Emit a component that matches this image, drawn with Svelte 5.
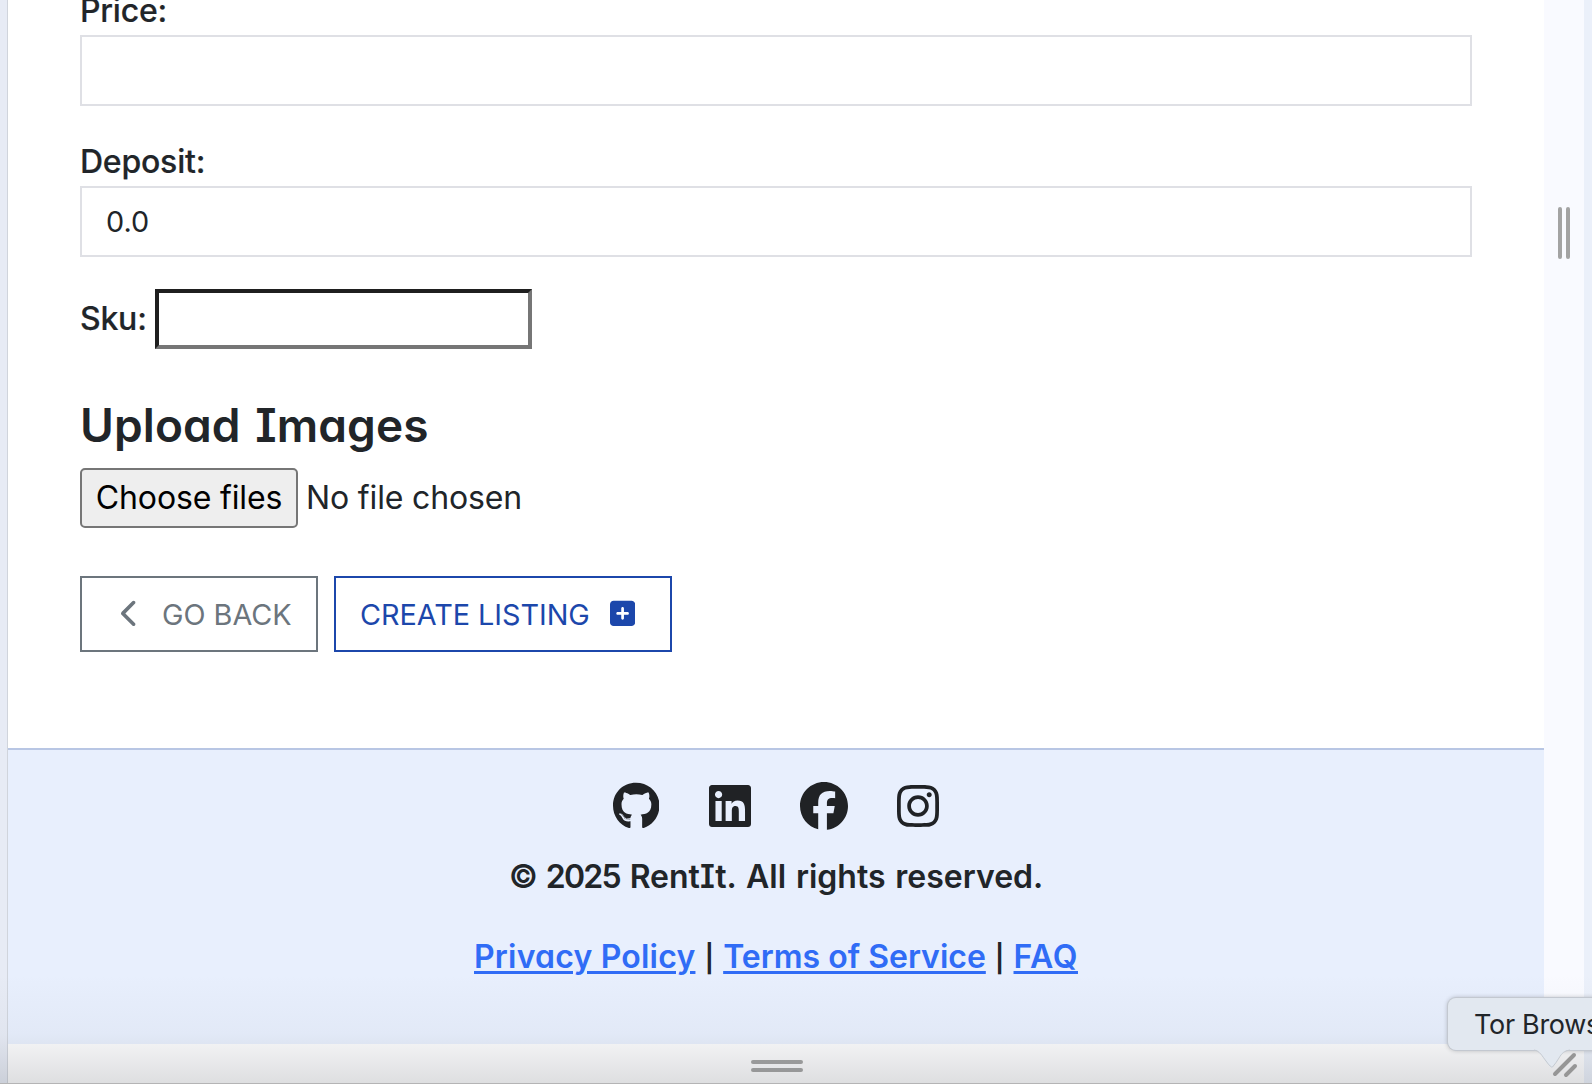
<script>
  const socials = [
    { name: 'GitHub', w: 496, d: 'M165.9 397.4c0 2-2.3 3.6-5.2 3.6-3.3.3-5.6-1.3-5.6-3.6 0-2 2.3-3.6 5.2-3.6 3-.3 5.6 1.3 5.6 3.6zm-31.1-4.5c-.7 2 1.3 4.3 4.3 4.9 2.6 1 5.6 0 6.2-2s-1.3-4.3-4.3-5.2c-2.6-.7-5.5.3-6.2 2.3zm44.2-1.7c-2.9.7-4.9 2.6-4.6 4.9.3 2 2.9 3.3 5.9 2.6 2.9-.7 4.9-2.6 4.6-4.6-.3-1.9-3-3.2-5.9-2.9zM244.8 8C106.1 8 0 113.3 0 252c0 110.9 69.8 205.8 169.5 239.2 12.8 2.3 17.3-5.6 17.3-12.1 0-6.2-.3-40.4-.3-61.4 0 0-70 15-84.7-29.8 0 0-11.4-29.1-27.8-36.6 0 0-22.9-15.7 1.6-15.4 0 0 24.9 2 38.6 25.8 21.9 38.6 58.6 27.5 72.9 20.9 2.3-16 8.8-27.1 16-33.7-55.9-6.2-112.3-14.3-112.3-110.5 0-27.5 7.6-41.3 23.6-58.9-2.6-6.5-11.1-33.3 2.6-67.9 20.9-6.5 69 27 69 27 20-5.6 41.5-8.5 62.8-8.5s42.8 2.9 62.8 8.5c0 0 48.1-33.6 69-27 13.7 34.7 5.2 61.4 2.6 67.9 16 17.7 25.8 31.5 25.8 58.9 0 96.5-58.9 104.2-114.8 110.5 9.2 7.9 17 22.9 17 46.4 0 33.7-.3 75.4-.3 83.6 0 6.5 4.6 14.4 17.3 12.1C428.2 457.8 496 362.9 496 252 496 113.3 383.5 8 244.8 8zM97.2 352.9c-1.3 1-1 3.3.7 5.2 1.6 1.6 3.9 2.3 5.2 1 1.3-1 1-3.3-.7-5.2-1.6-1.6-3.9-2.3-5.2-1zm-10.8-8.1c-.7 1.3.3 2.9 2.3 3.9 1.6 1 3.6.7 4.3-.7.7-1.3-.3-2.9-2.3-3.9-2-.6-3.6-.3-4.3.7zm32.4 35.6c-1.6 1.3-1 4.3 1.3 6.2 2.3 2.3 5.2 2.6 6.5 1 1.3-1.3.7-4.3-1.3-6.2-2.2-2.3-5.2-2.6-6.5-1zm-11.4-14.7c-1.6 1-1.6 3.6 0 5.9 1.6 2.3 4.3 3.3 5.6 2.3 1.6-1.3 1.6-3.9 0-6.2-1.4-2.3-4-3.3-5.6-2z' },
    { name: 'LinkedIn', w: 448, d: 'M416 32H31.9C14.3 32 0 46.5 0 64.3v383.4C0 465.5 14.3 480 31.9 480H416c17.6 0 32-14.5 32-32.3V64.3c0-17.8-14.4-32.3-32-32.3zM135.4 416H69V202.2h66.5V416zm-33.2-243c-21.3 0-38.5-17.3-38.5-38.5S80.9 96 102.2 96c21.2 0 38.5 17.3 38.5 38.5 0 21.3-17.2 38.5-38.5 38.5zm282.1 243h-66.4V312c0-24.8-.5-56.7-34.5-56.7-34.6 0-39.9 27-39.9 54.9V416h-66.4V202.2h63.7v29.2h.9c8.9-16.8 30.6-34.5 62.9-34.5 67.2 0 79.7 44.3 79.7 101.9V416z' },
    { name: 'Facebook', w: 512, d: 'M512 256C512 114.6 397.4 0 256 0S0 114.6 0 256C0 376 82.7 476.8 194.2 504.5V334.2H141.4V256h52.8V222.3c0-87.1 39.4-127.5 125-127.5c16.2 0 44.2 3.2 55.7 6.4V172c-6-.6-16.5-1-29.6-1c-42 0-58.2 15.9-58.2 57.2V256h83.6l-14.4 78.2H287V510.1C413.8 494.8 512 386.9 512 256z' },
    { name: 'Instagram', w: 448, d: 'M224.1 141c-63.6 0-114.9 51.3-114.9 114.9s51.3 114.9 114.9 114.9S339 319.5 339 255.9 287.7 141 224.1 141zm0 189.6c-41.1 0-74.7-33.5-74.7-74.7s33.5-74.7 74.7-74.7 74.7 33.5 74.7 74.7-33.6 74.7-74.7 74.7zm146.4-194.3c0 14.9-12 26.8-26.8 26.8-14.9 0-26.8-12-26.8-26.8s12-26.8 26.8-26.8 26.8 12 26.8 26.8zm76.1 27.2c-1.7-35.9-9.9-67.7-36.2-93.9-26.2-26.2-58-34.4-93.9-36.2-37-2.1-147.9-2.1-184.9 0-35.8 1.7-67.6 9.9-93.9 36.1s-34.4 58-36.2 93.9c-2.1 37-2.1 147.9 0 184.9 1.7 35.9 9.9 67.7 36.2 93.9s58 34.4 93.9 36.2c37 2.1 147.9 2.1 184.9 0 35.9-1.7 67.7-9.9 93.9-36.2 26.2-26.2 34.4-58 36.2-93.9 2.1-37 2.1-147.8 0-184.8zM398.8 388c-7.8 19.6-22.9 34.7-42.6 42.6-29.5 11.7-99.5 9-132.1 9s-102.7 2.6-132.1-9c-19.6-7.8-34.7-22.9-42.6-42.6-11.7-29.5-9-99.5-9-132.1s-2.6-102.7 9-132.1c7.8-19.6 22.9-34.7 42.6-42.6 29.5-11.7 99.5-9 132.1-9s102.7-2.6 132.1 9c19.6 7.8 34.7 22.9 42.6 42.6 11.7 29.5 9 99.5 9 132.1s2.7 102.7-9 132.1z' }
  ];
</script>

<div class="window">
  <div class="edge"></div>
  <div class="device">
    <div class="row">
      <div class="page">
        <main>
          <label class="label first" for="price">Price:</label>
          <input id="price" class="field" type="text" />
          <label class="label second" for="deposit">Deposit:</label>
          <input id="deposit" class="field" type="text" value="0.0" />
          <div class="sku">
            <label class="label" for="sku">Sku:</label>
            <input id="sku" type="text" />
          </div>
          <h2>Upload Images</h2>
          <div class="file">
            <button class="choose">Choose files</button>
            <span class="chosen">No file chosen</span>
          </div>
          <div class="actions">
            <button class="btn back">
              <svg width="18" height="28.8" viewBox="0 0 320 512"><path d="M9.4 233.4c-12.5 12.5-12.5 32.8 0 45.3l192 192c12.5 12.5 32.8 12.5 45.3 0s12.5-32.8 0-45.3L77.3 256 246.6 86.6c12.5-12.5 12.5-32.8 0-45.3s-32.8-12.5-45.3 0l-192 192z" /></svg>
              <span>GO BACK</span>
            </button>
            <button class="btn create">
              <span>CREATE LISTING</span>
              <svg width="25.2" height="28.8" viewBox="0 0 448 512"><path d="M64 32C28.7 32 0 60.7 0 96V416c0 35.3 28.7 64 64 64H384c35.3 0 64-28.7 64-64V96c0-35.3-28.7-64-64-64H64zM200 344V280H136c-13.3 0-24-10.7-24-24s10.7-24 24-24h64V168c0-13.3 10.7-24 24-24s24 10.7 24 24v64h64c13.3 0 24 10.7 24 24s-10.7 24-24 24H248v64c0 13.3-10.7 24-24 24s-24-10.7-24-24z" /></svg>
            </button>
          </div>
        </main>
        <footer>
          <div class="socials">
            {#each socials as s}
              <svg height="48" width={s.w * 48 / 512} viewBox="0 0 {s.w} 512" role="img" aria-label={s.name}><path d={s.d} /></svg>
            {/each}
          </div>
          <p class="copy">© <span class="year">2025</span> RentIt. All rights reserved.</p>
          <nav>
            <a class="privacy" href="#privacy">Privacy Policy</a>
            <span class="pipe">|</span>
            <a class="terms" href="#terms">Terms of Service</a>
            <span class="pipe">|</span>
            <a class="faq" href="#faq">FAQ</a>
          </nav>
        </footer>
      </div>
      <div class="rail"><i></i><i></i></div>
    </div>
    <div class="bottom"><i></i><i></i></div>
  </div>
  <div class="edge right"></div>
  <div class="shade"></div>
  <div class="tip">
    <span>Tor Browser</span>
    <svg class="tail" width="36" height="20" viewBox="0 0 36 20"><path class="fill" d="M0 0C6 2 8 7 12 13Q17 20 18.500 18Q22 14 25 9C28 4 30 2 36 0Z" /><path class="line" d="M0 1C6 2 8 7 12 12Q17 19 18.500 18Q22 14 25 9C28 4 30 2 36 1" /></svg>
  </div>
  <svg class="corner" width="26" height="26" viewBox="0 0 26 26"><path d="M3 22 22 3M14 23 23 14" /></svg>
</div>

<style>
  :global(body) { margin: 0; overflow: hidden; }
  * { box-sizing: border-box; }
  .window {
    position: relative;
    display: flex;
    width: 1592px;
    height: 1084px;
    overflow: hidden;
    font-family: Inter, sans-serif;
    font-size: 32px;
    color: #212529;
    background: #fff;
  }
  .edge { width: 8px; flex: none; background: #e7ebf5; border-right: 1px solid #d0d4dc; }
  .edge.right { background: #ebf0fa; border: 0; }
  .device { flex: 1; display: flex; flex-direction: column; min-width: 0; }
  .row { display: flex; height: 1044px; }
  .page { width: 1536px; display: flex; flex-direction: column; }
  main { height: 748px; padding: 0 72px; display: flex; flex-direction: column; align-items: flex-start; }
  .label { display: block; font-weight: 500; line-height: 48px; letter-spacing: -0.22px; -webkit-text-stroke: 0.2px; }
  .first { margin-top: -13px; }
  .second { margin-top: 32px; }
  .field {
    width: 1392px;
    height: 71px;
    border: 2px solid #dfe0e5;
    background: #fff;
    padding: 0 24px;
    font: 400 28.8px Inter, sans-serif;
    color: #212529;
    outline: none;
  }
  .sku { display: flex; align-items: center; margin-top: 32px; height: 60px; }
  .sku .label { width: 75px; }
  .sku input { width: 377px; height: 60px; border: 4px solid; border-color: #1f1f1f #767676 #767676 #1f1f1f; background: #fff; padding: 0; }
  h2 { margin: 47px 0 0; height: 72px; font-size: 46px; line-height: 58px; font-weight: 600; font-feature-settings: 'cv08', 'cv11'; word-spacing: 3px; letter-spacing: 0.1px; white-space: nowrap; }
  .file { display: flex; align-items: center; gap: 8px; height: 60px; }
  .choose { width: 218px; height: 60px; border: 2px solid #767676; border-radius: 5px; background: #eee; font: 400 32px Inter, sans-serif; letter-spacing: -0.15px; color: #000; padding: 0 0 2px; white-space: nowrap; }
  .chosen { letter-spacing: -0.15px; padding-bottom: 2px; }
  .actions { display: flex; gap: 16px; margin-top: 48px; }
  .btn { display: flex; align-items: center; height: 76px; background: #fff; border: 2px solid currentColor; padding: 0; font: 400 28.8px Inter, sans-serif; white-space: nowrap; }
  .btn svg { fill: currentColor; margin-top: -2px; }
  .back { width: 238px; color: #6c757d; padding-left: 39px; gap: 23px; }
  .create { width: 338px; color: #1c47ab; padding-left: 24px; gap: 20px; letter-spacing: -0.04px; }
  footer { flex: 1; border-top: 2px solid #b8c6e4; background: #e8effd; font-feature-settings: 'cv08', 'cv11'; font-weight: 600; }
  .socials { display: flex; justify-content: center; gap: 49.45px; padding-top: 32px; }
  .socials svg { fill: #202225; }
  .copy { margin: 23px 0 0; text-align: center; line-height: 48px; word-spacing: 1.8px; }
  .year { letter-spacing: -1.8px; margin: 0 0 0 -2px; }
  nav { display: flex; justify-content: center; align-items: center; height: 48px; gap: 9px; margin-top: 32px; line-height: 48px; }
  a { color: #306cf6; text-underline-offset: 3px; text-decoration-thickness: 3px; }
  .privacy { letter-spacing: 0.2px; }
  .faq { letter-spacing: 0.6px; }
  .pipe { font-size: 27px; padding-top: 3px; }
  .rail { width: 40px; background: #f9faff; display: flex; gap: 4px; padding: 207px 0 0 14px; }
  .rail i { width: 4px; height: 52px; border-radius: 2px; background: #a3a3a3; }
  .bottom { flex: 1; background: #fdfdfe; display: flex; flex-direction: column; align-items: center; gap: 4px; padding: 16px 38px 0 0; }
  .bottom i { width: 52px; height: 4px; border-radius: 2px; background: #a3a3a3; }
  .shade { position: absolute; left: 0; right: 0; bottom: 0; height: 110px; border-bottom: 1px solid #b4b4b5; background: linear-gradient(rgba(80, 90, 100, 0), rgba(80, 90, 100, 0.04) 55%, rgba(80, 85, 90, 0.18)); }
  .corner { position: absolute; left: 1552px; top: 1052px; fill: none; stroke: #969696; stroke-width: 4; stroke-linecap: round; }
  .tip { position: absolute; left: 1448px; top: 998px; width: 210px; height: 52px; border-radius: 8px; background: #e2e8f0; box-shadow: 0 0 0 1px #c3c8d0, 0 0 5px rgba(0, 0, 0, 0.3); padding-left: 26px; font-size: 27px; line-height: 54px; letter-spacing: -0.3px; white-space: nowrap; }
  .tail { position: absolute; left: 86px; top: 51px; }
  .fill { fill: #e2e8f0; }
  .line { fill: none; stroke: #c5cad1; stroke-width: 1; }
</style>
